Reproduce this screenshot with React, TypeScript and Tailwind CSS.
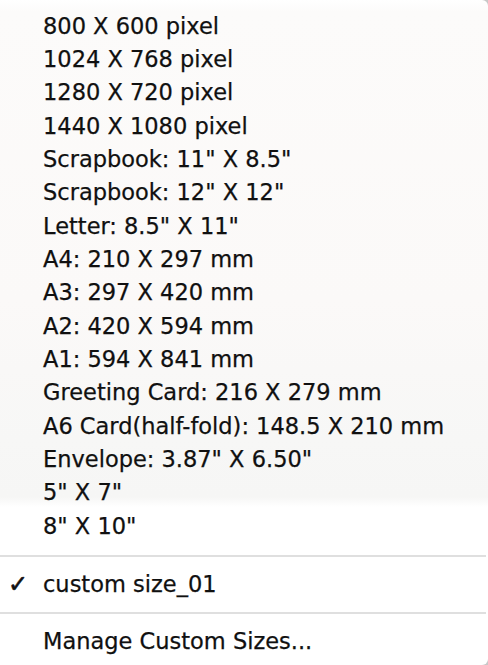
import React from 'react';

const sizes = [
  '800 X 600 pixel',
  '1024 X 768 pixel',
  '1280 X 720 pixel',
  '1440 X 1080 pixel',
  'Scrapbook: 11" X 8.5"',
  'Scrapbook: 12" X 12"',
  'Letter: 8.5" X 11"',
  'A4: 210 X 297 mm',
  'A3: 297 X 420 mm',
  'A2: 420 X 594 mm',
  'A1: 594 X 841 mm',
  'Greeting Card: 216 X 279 mm',
  'A6 Card(half-fold): 148.5 X 210 mm',
  'Envelope: 3.87" X 6.50"',
  '5" X 7"',
  '8" X 10"',
];

const MenuItem: React.FC<{ label: string; checked?: boolean }> = ({ label, checked }) => (
  <div className="h-[33.33px] flex items-center">
    <span className="w-[43px] shrink-0 pl-[8px] text-[24px] leading-none text-[#111] [-webkit-text-stroke:0.6px_#111]">
      {checked ? '✓' : ''}
    </span>
    <span className="whitespace-nowrap">{label}</span>
  </div>
);

const Separator: React.FC = () => (
  <div className="h-[24.5px] flex items-center pr-[2px]">
    <div className="h-[2px] w-full bg-[#dfdfdf]"></div>
  </div>
);

export default function App() {
  return (
    <div className="w-[488px] h-[665px] bg-[#c8c8c8] overflow-hidden">
      {/* Popup menu */}
      <div className="w-full h-full rounded-r-[6px] bg-[linear-gradient(180deg,#ffffff_0px,#fcfbfa_12px,#fbf9f8_300px,#f7f7f6_440px,#f6f6f5_497px,#ffffff_507px,#ffffff_100%)] pt-[10px] text-[22.5px] text-[#101010] [-webkit-text-stroke:0.25px_#101010] font-['DejaVu_Sans',sans-serif] select-none">
        {sizes.map((s) => (
          <MenuItem key={s} label={s} />
        ))}

        <Separator />

        <MenuItem label="custom size_01" checked />

        <Separator />

        <MenuItem label="Manage Custom Sizes..." />
      </div>
    </div>
  );
}
